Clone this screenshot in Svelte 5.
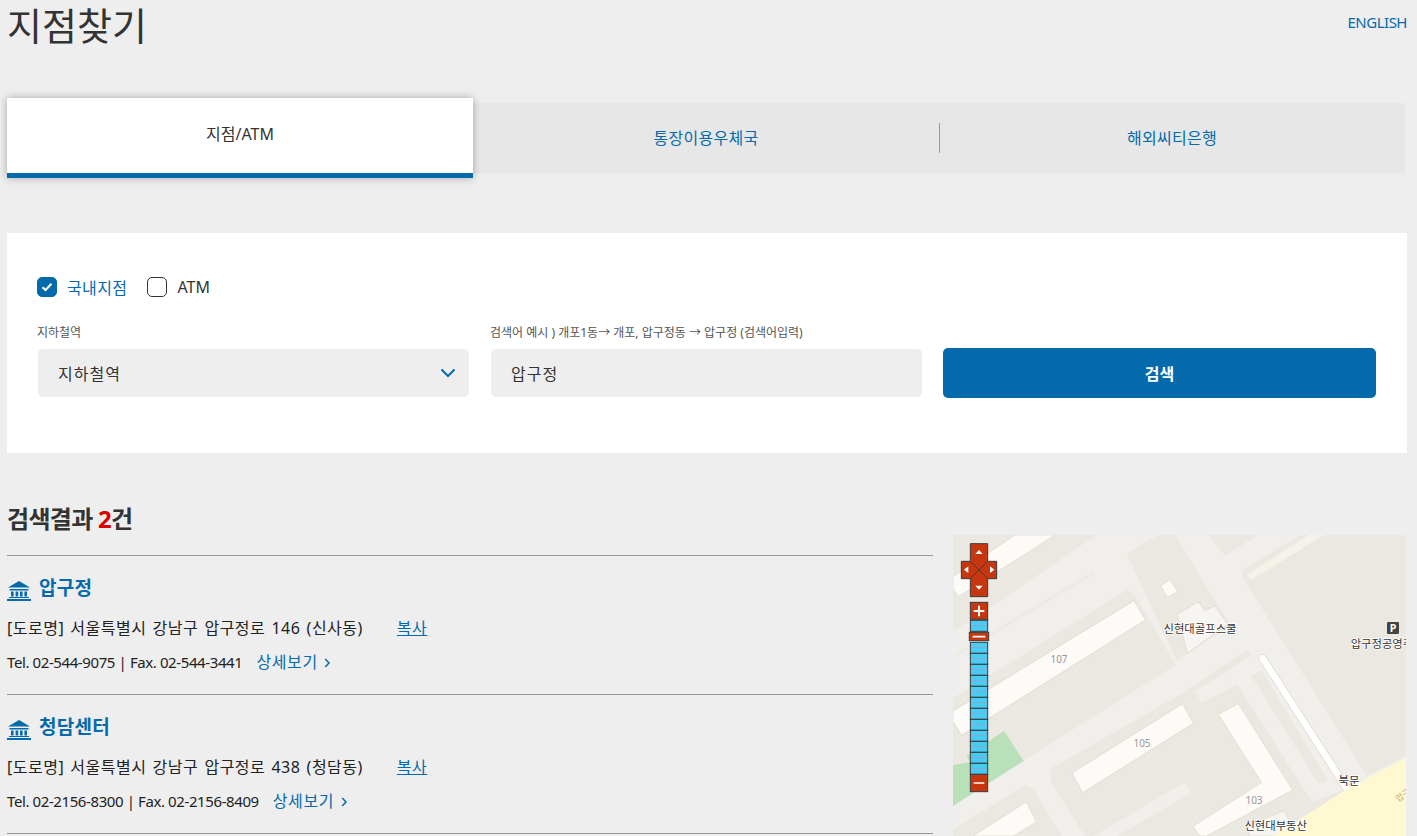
<script>
  const results = [
    { name: '압구정', addr: '[도로명] 서울특별시 강남구 압구정로 146 (신사동)', tel: 'Tel. 02-544-9075 | Fax. 02-544-3441' },
    { name: '청담센터', addr: '[도로명] 서울특별시 강남구 압구정로 438 (청담동)', tel: 'Tel. 02-2156-8300 | Fax. 02-2156-8409' }
  ];
  const rows = [256, 322, 355, 388, 421, 454, 487, 520, 553, 586, 619, 652, 685];
</script>

<div class="page">
  <header class="top">
    <h1>지점찾기</h1>
    <a class="lang" href="#en">ENGLISH</a>
  </header>

  <nav class="tabs">
    <a class="tab active" href="#a">지점/ATM</a>
    <a class="tab" href="#b">통장이용우체국</a>
    <a class="tab sep" href="#c">해외씨티은행</a>
  </nav>

  <section class="panel">
    <div class="checks">
      <span class="box on">
        <svg width="12" height="10" viewBox="0 0 12 10"><path d="M1.5 5.2 4.5 8 10.5 1.8" fill="none" stroke="#fff" stroke-width="2"/></svg>
      </span>
      <span class="check-label on">국내지점</span>
      <span class="box"></span>
      <span class="check-label">ATM</span>
    </div>
    <div class="fields">
      <div class="field">
        <div class="hint">지하철역</div>
        <div class="control select">
          지하철역
          <svg width="16" height="10" viewBox="0 0 16 10"><path d="M1.5 1.5 8 8 14.5 1.5" fill="none" stroke="#046aab" stroke-width="2"/></svg>
        </div>
      </div>
      <div class="field">
        <div class="hint">검색어 예시 ) 개포1동→ 개포, 압구정동 → 압구정 (검색어입력)</div>
        <div class="control">압구정</div>
      </div>
      <button class="search">검색</button>
    </div>
  </section>

  <h2>검색결과 <em>2</em>건</h2>

  <section class="results">
    <div class="list">
      {#each results as r}
        <article class="item">
          <h3>
            <svg width="24" height="20" viewBox="0 0 24 20">
              <path d="M12 0 23 6.5H1Z M2.5 8h19v1.6h-19Z M4 10.5h2.6v5H4Z M8.6 10.5h2.6v5H8.6Z M13 10.5h2.6v5H13Z M17.4 10.5H20v5h-2.6Z M2 16h20v1H2Z M0 18h24v2H0Z" fill="#046aab"/>
            </svg>
            {r.name}
          </h3>
          <p class="addr">{r.addr}<a class="copy" href="#copy">복사</a></p>
          <p class="tel">{r.tel}<a class="more" href="#more">상세보기
            <svg width="7" height="10" viewBox="0 0 7 10"><path d="M1.2 1 5 5 1.2 9" fill="none" stroke="#046aab" stroke-width="1.5"/></svg>
          </a></p>
        </article>
      {/each}
    </div>

    <div class="map">
      <svg class="map-svg" width="453" height="301" viewBox="9 0 1359 903">
        <rect x="9" y="0" width="1359" height="903" fill="#f0efeb"/>
        <!-- blocks -->
        <g fill="#ebe8e1">
          <path d="M9 0H440L115 222 9 290Z"/>
          <path d="M880 105 1050 0H1368V663L1250 723 876 125Z"/>
          <path d="M530 55 625 0H675L840 270 680 378Z"/>
          <path d="M775 0H925L825 62Z"/>
          <path d="M9 490 530 165 552 175 677 390 220 678 9 810Z"/>
          <path d="M299 703 699 473 890 345 905 360 800 428 865 453 1075 783 1090 798 1160 773 1190 763 970 903H405L305 745Z"/>
          <path d="M903 422 935 405 1133 735 1105 745Z"/>
          <path d="M9 883 229 748 254 768 334 903H9Z"/>
        </g>
        <path d="M9 365 430 115" stroke="#ecebe6" stroke-width="12" fill="none"/>
        <path d="M735 468 840 405 862 447 755 505Z" fill="#f0efeb"/>
        <path d="M430 903 705 742 723 775 500 903Z" fill="#f0efeb"/>
        <path d="M9 813 221 678 162 588 49 663 60 682 9 690Z" fill="#b9e1b9"/>
        <!-- buildings -->
        <path d="M890 120 1075 0H1120L905 135Z" fill="#f5f2ea"/>
        <g fill="#fcfbf8" stroke="#ddd6c7" stroke-width="2">
          <path d="M9 125 195 0H315L25 185 9 160Z"/>
          <path d="M9 528 552 197 586 255 35 601 9 560Z"/>
          <path d="M632 152 660 134 683 170 652 187Z"/>
          <path d="M682 238 745 200 765 228 795 212 833 268 712 355Z" fill="#f6f5f1"/>
          <path d="M366 714 698 506 730 565 398 773Z"/>
          <path d="M805 538 865 506 1028 765 770 903H750L729 874 935 743Z"/>
          <path d="M69 903 229 801 259 861 190 903Z"/>
          <path d="M890 873 1000 828 1030 873 980 903H900Z" fill="#f6f5f1"/>
        </g>
        <path d="M938 370 1190 760" fill="none" stroke="#ddd6c7" stroke-width="24" stroke-linecap="round"/>
        <path d="M938 370 1190 760" fill="none" stroke="#fff" stroke-width="20" stroke-linecap="round"/>
        <path d="M1368 668V903H970L1190 763Z" fill="#fef9d0"/>
        <!-- labels -->
        <g class="poi">
          <text x="750" y="295">신현대골프스쿨</text>
          <text class="start" x="1202" y="338">압구정공영주차장</text>
          <text x="1197" y="750">북문</text>
          <text x="977" y="885">신현대부동산</text>
        </g>
        <g class="num">
          <text x="327" y="384">107</text>
          <text x="576" y="636">105</text>
          <text x="912" y="807">103</text>
        </g>
        <text class="road" x="1345" y="802" transform="rotate(-35 1345 802)">압구정로</text>
        <rect x="1311" y="261" width="36" height="36" rx="4" fill="#444"/>
        <text class="park" x="1329" y="291">P</text>

        <!-- pan control -->
        <path d="M61 26H113V79H140V131H113V185H61V131H34V79H61Z" fill="#c6360f" stroke="#3a3a3a" stroke-width="3"/>
        <path d="M61 79 113 131M113 79 61 131" stroke="#3a3a3a" stroke-width="2.5"/>
        <path d="M87 45 98 57H76Z M87 164 98 152H76Z M42 104 55 94V114Z M133 104 120 94V114Z" fill="#fff"/>

        <!-- zoom bar -->
        {#each rows as y}
          <rect x="61" {y} width="52" height="33" fill="#3cc8f2" fill-opacity="0.92" stroke="#3a3a3a" stroke-width="3"/>
          <rect x="63" y={y + 15} width="48" height="2" fill="#a79bcb"/>
        {/each}
        <g fill="#c6360f" stroke="#3a3a3a" stroke-width="3">
          <rect x="61" y="202" width="52" height="51"/>
          <rect x="61" y="718" width="52" height="52"/>
          <rect x="58" y="292" width="58" height="25"/>
        </g>
        <path d="M71 228H103M87 212V244" stroke="#fff" stroke-width="6" fill="none"/>
        <path d="M71 744H103M68 305H106" stroke="#fff" stroke-width="5" fill="none"/>
      </svg>
    </div>
  </section>
</div>

<style>
  :global(body) {
    background: #eee;
    font-family: "Noto Sans", "Noto Sans CJK KR", sans-serif;
    color: #333;
  }
  .page {
    width: 1417px;
    height: 836px;
    overflow: hidden;
    box-sizing: border-box;
    padding: 0 10px 0 7px;
  }
  a { text-decoration: none; color: #046aab; }
  .top {
    height: 98px;
    display: flex;
    justify-content: space-between;
    align-items: flex-start;
  }
  h1 {
    margin: 0;
    font-size: 38px;
    font-weight: 400;
    line-height: 50px;
  }
  .lang { font-size: 15px; line-height: 44px; letter-spacing: -0.5px; }
  .tabs {
    display: flex;
    width: 1398px;
    height: 70px;
    margin-top: 5px;
    background: #e7e7e7;
    align-items: center;
  }
  .tab {
    flex: 1;
    font-size: 16px;
    letter-spacing: .3px;
    text-align: center;
    position: relative;
    line-height: 70px;
  }
  .tab.active {
    flex: none;
    width: 466px;
    height: 80px;
    box-sizing: border-box;
    line-height: 73px;
    background: #fff;
    color: #333;
    letter-spacing: 0;
    border-bottom: 5px solid #046aab;
    box-shadow: 0 0 8px rgba(0, 0, 0, .3);
    z-index: 1;
  }
  .tab.sep::before {
    content: "";
    position: absolute;
    left: 0;
    top: 20px;
    height: 30px;
    border-left: 1px solid #999;
  }
  .panel {
    margin-top: 60px;
    height: 220px;
    background: #fff;
    box-sizing: border-box;
    padding: 44px 30px 0;
  }
  .checks {
    display: flex;
    align-items: center;
    height: 20px;
    font-size: 16px;
  }
  .box {
    width: 20px;
    height: 20px;
    box-sizing: border-box;
    border: 1px solid #333;
    border-radius: 5px;
    display: flex;
    align-items: center;
    justify-content: center;
  }
  .box.on { background: #046aab; border-color: #046aab; }
  .check-label { margin-left: 10px; margin-right: 20px; }
  .check-label.on { color: #046aab; letter-spacing: .4px; }
  .fields {
    display: grid;
    grid-template-columns: 431px 431px 432px;
    column-gap: 22px;
    margin-top: 25px;
    margin-left: 1px;
    align-items: end;
  }
  .hint {
    font-size: 12px;
    line-height: 21px;
    height: 21px;
    color: #555;
    margin-bottom: 6px;
    margin-left: -1px;
    white-space: nowrap;
  }
  .control {
    height: 48px;
    background: #eee;
    border-radius: 5px;
    box-sizing: border-box;
    padding: 0 20px;
    display: flex;
    align-items: center;
    justify-content: space-between;
    font-size: 16px;
    letter-spacing: 1px;
  }
  .select { padding-right: 13px; }
  .search {
    height: 50px;
    border: 0;
    border-radius: 5px;
    background: #046aab;
    color: #fff;
    font: inherit;
    font-size: 16px;
    font-weight: 700;
    margin-bottom: -1px;
    margin-left: -1px;
  }
  h2 {
    margin: 49px 0 0;
    font-size: 24px;
    font-weight: 700;
    line-height: 34px;
    letter-spacing: -0.7px;
  }
  h2 em { color: #d00; font-style: normal; }
  .results {
    display: grid;
    grid-template-columns: 926px 453px;
    column-gap: 20px;
    margin-top: -1px;
  }
  .list { padding-top: 20px; }
  .item {
    border-top: 1px solid #999;
    height: 138px;
  }
  .item:last-child { border-bottom: 1px solid #999; }
  h3 {
    margin: 0;
    padding-top: 17px;
    display: flex;
    align-items: center;
    gap: 8px;
    font-size: 19px;
    letter-spacing: .3px;
    font-weight: 700;
    color: #046aab;
    line-height: 30px;
  }
  h3 svg { margin-top: 6px; }
  p { margin: 0; font-size: 16px; color: #222; }
  .addr { margin-top: 12px; line-height: 26px; letter-spacing: .5px; word-spacing: 1.5px; }
  .tel { margin-top: 8px; line-height: 26px; letter-spacing: -0.4px; font-size: 15px; }
  .copy { text-decoration: underline; margin-left: 34px; }
  .more { margin-left: 14px; letter-spacing: .6px; font-size: 16px; }
  .more svg { margin-left: 2px; }
  .map { height: 301px; overflow: hidden; }
  .map-svg { display: block; }
  .poi text {
    font-size: 34px;
    fill: #333;
    text-anchor: middle;
    stroke: #fff;
    stroke-width: 4px;
    paint-order: stroke;
  }
  .poi text.start { text-anchor: start; }
  .num text { font-size: 30px; fill: #999; text-anchor: middle; }
  .road { font-size: 26px; fill: #c8a868; }
  .park { font-size: 32px; font-weight: 700; fill: #fff; text-anchor: middle; }
</style>
